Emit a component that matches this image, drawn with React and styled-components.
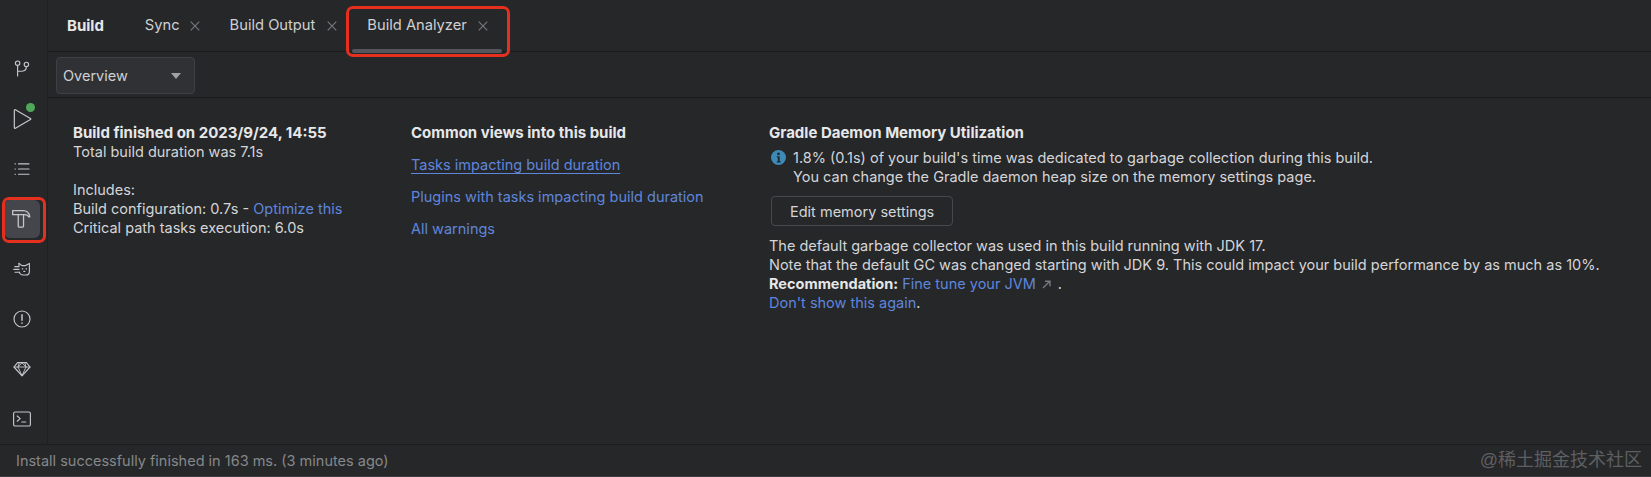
import React from 'react';
import styled, { createGlobalStyle } from 'styled-components';

const GlobalStyle = createGlobalStyle`
    html, body {
        margin: 0;
        padding: 0;
        background: #262729;
    }
    body {
        font-family: Inter, "Noto Sans", "Liberation Sans", sans-serif;
        font-size: 14.5px;
        line-height: 19px;
        color: #d4d5d8;
    }
`;

const Window = styled.div`
    width: 1651px;
    height: 477px;
    display: flex;
    flex-direction: column;
    position: relative;
    overflow: hidden;
    background: #262729;
`;

const Main = styled.div`
    display: flex;
    height: 444px;
    border-bottom: 1px solid #1c1d1f;
`;

const SideBar = styled.div`
    width: 48px;
    flex-shrink: 0;
    padding-top: 50px;
    display: flex;
    flex-direction: column;
    align-items: flex-start;
    gap: 12px;
    box-sizing: border-box;
    border-right: 1px solid #1f2022;
`;

const SideButton = styled.div`
    width: 36px;
    height: 38px;
    margin-left: 4px;
    border-radius: 6px;
    display: flex;
    align-items: center;
    justify-content: center;
    position: relative;
    color: #c4c6c9;
    background: ${props => props.$active ? '#45464b' : 'transparent'};
`;

const RedFrame = styled.div`
    position: absolute;
    border: 3px solid #e5301f;
    border-radius: 7px;
    box-sizing: border-box;
    pointer-events: none;
`;

const SideFrame = styled(RedFrame)`
    left: -2px;
    top: -3px;
    width: 44px;
    height: 46px;
`;

const Panel = styled.div`
    flex: 1;
    display: flex;
    flex-direction: column;
    min-width: 0;
`;

const TabStrip = styled.div`
    height: 52px;
    flex-shrink: 0;
    box-sizing: border-box;
    border-bottom: 1px solid #1b1c1e;
    padding-left: 19px;
    display: flex;
    align-items: stretch;
`;

const TabTitle = styled.div`
    font-weight: 700;
    font-size: 15px;
    color: #e6e7e9;
    display: flex;
    align-items: center;
    margin-right: 41px;
`;

const Tab = styled.div`
    display: flex;
    align-items: center;
    gap: ${props => props.$closeGap}px;
    font-size: 14.7px;
    color: #cfd0d3;
    margin-right: ${props => props.$gap}px;
    position: relative;
`;

const TabUnderline = styled.div`
    position: absolute;
    left: -15px;
    right: -14px;
    bottom: -2px;
    height: 4px;
    border-radius: 2px;
    background: #55565d;
`;

const TabFrame = styled(RedFrame)`
    left: -21px;
    right: -22px;
    top: 6px;
    bottom: -6px;
`;

const CloseMark = styled.svg`
    width: 10px;
    height: 10px;
    flex-shrink: 0;
    stroke: #77797d;
    stroke-width: 1.1;
    fill: none;
`;

const Toolbar = styled.div`
    height: 46px;
    flex-shrink: 0;
    box-sizing: border-box;
    border-bottom: 1px solid #1b1c1e;
    padding: 5px 0 0 8px;
`;

const Dropdown = styled.div`
    width: 139px;
    height: 37px;
    box-sizing: border-box;
    background: #303135;
    border: 1px solid #3f4044;
    border-radius: 4px;
    padding: 0 13px 0 6px;
    display: flex;
    align-items: center;
    justify-content: space-between;
    color: #cfd0d3;
`;

const Caret = styled.div`
    width: 0;
    height: 0;
    border-left: 5.5px solid transparent;
    border-right: 5.5px solid transparent;
    border-top: 6px solid #a0a1a5;
`;

const Content = styled.div`
    flex: 1;
    display: flex;
    padding: 25px 0 0 25px;
`;

const SummaryColumn = styled.div`
    width: 338px;
    flex-shrink: 0;
`;

const ViewsColumn = styled.div`
    width: 358px;
    flex-shrink: 0;
`;

const MemoryColumn = styled.div`
    flex: 1;
`;

const Heading = styled.div`
    font-weight: 700;
    font-size: 15px;
    color: #e6e7e9;
    white-space: nowrap;
`;

const Line = styled.div`
    min-height: 19px;
    white-space: nowrap;
`;

const Link = styled.span`
    color: #5f86db;
    text-decoration: ${props => props.$underline ? 'underline' : 'none'};
    text-underline-offset: 3px;
    text-decoration-thickness: 1px;
`;

const ViewLink = styled(Link)`
    display: block;
    margin-top: 13px;
    white-space: nowrap;
`;

const Strong = styled.span`
    font-weight: 700;
    color: #e6e7e9;
`;

const InfoRow = styled.div`
    display: flex;
    gap: 7px;
    margin-top: 6px;
    margin-left: 2px;
`;

const InfoIcon = styled.svg`
    width: 15px;
    height: 15px;
    margin-top: 2px;
    flex-shrink: 0;
`;

const EditButton = styled.div`
    width: 182px;
    height: 30px;
    margin: 10px 0 10px 2px;
    box-sizing: border-box;
    border: 1px solid #47484d;
    border-radius: 4px;
    display: flex;
    align-items: center;
    padding-left: 18px;
    color: #d4d5d8;
`;

const OutArrow = styled.svg`
    width: 9px;
    height: 9px;
    margin: 0 7px 0 6px;
    stroke: #77797d;
    stroke-width: 1.4;
    fill: none;
`;

const StatusBar = styled.div`
    flex: 1;
    display: flex;
    align-items: center;
    justify-content: space-between;
    padding: 0 9px 0 16px;
    color: #85878b;
    border-bottom: 1px solid #3a3b3e;
`;

const Watermark = styled.div`
    font-family: "Liberation Sans", "Noto Sans CJK SC", sans-serif;
    font-size: 18px;
    color: #5e5f61;
    white-space: nowrap;
`;

const RunDot = styled.div`
    position: absolute;
    top: 3px;
    right: 5px;
    width: 9px;
    height: 9px;
    border-radius: 50%;
    background: #4fa85a;
`;

const Icon = ({ children, size = 20 }) => (
    <svg width={size} height={size} viewBox="0 0 20 20" fill="none" stroke="currentColor" strokeWidth="1.15" strokeLinecap="round" strokeLinejoin="round">
        {children}
    </svg>
);

const Close = () => (
    <CloseMark viewBox="0 0 10 10"><path d="M.7.7l8.6 8.6M9.3.7L.7 9.3" /></CloseMark>
);

export default function App() {
    return (
        <Window>
            <GlobalStyle />
            <Main>
                <SideBar>
                    <SideButton>
                        <Icon>
                            <circle cx="5.6" cy="4.2" r="2.2" />
                            <circle cx="14.4" cy="5.4" r="2.2" />
                            <path d="M5.6 6.4V17M5.6 12.2h4.4c2.6 0 4.4-1.8 4.4-4.6" />
                        </Icon>
                    </SideButton>
                    <SideButton>
                        <Icon size={24}>
                            <path d="M3.6 2.8v14.4c0 .5.5.8.9.5L17 10.4c.4-.2.4-.7 0-.9L4.5 2.3c-.4-.2-.9 0-.9.5z" strokeWidth="1" />
                        </Icon>
                        <RunDot />
                    </SideButton>
                    <SideButton>
                        <Icon>
                            <path d="M6.5 4.8h10.5M6.5 10h10.5M6.5 15.2h10.5M3 4.8h.4M3 10h.4M3 15.2h.4" />
                        </Icon>
                    </SideButton>
                    <SideButton $active>
                        <Icon size={22}>
                            <path d="M1.5 2.4h9.6c3.2 0 5.4 2 6 5.6h-.9c-.8-1.2-2-1.9-4-1.9H1.5z" />
                            <path d="M6.6 6.1v10.6c0 .4.2.6.6.6h3.6c.4 0 .6-.2.6-.6V6.1" />
                        </Icon>
                        <SideFrame />
                    </SideButton>
                    <SideButton>
                        <Icon>
                            <path d="M7 4.4l3 2.2h3.6L17.4 4.4v8c0 2.1-1.5 3.6-3.6 3.6h-2.6c-2 0-3.5-1.1-3.9-3" />
                            <path d="M7 4.4v2.8M2.8 7.6h4.2M1.8 10.4h5.2M3 13.2h4.2M10.2 9.8h.6M14 9.8h.6M11.8 12.4h1" />
                        </Icon>
                    </SideButton>
                    <SideButton>
                        <Icon>
                            <circle cx="10" cy="10" r="8" />
                            <path d="M10 5.8v5.4M10 14.1v.2" strokeWidth="1.5" />
                        </Icon>
                    </SideButton>
                    <SideButton>
                        <Icon>
                            <path d="M5.6 3.6h8.8L18 8l-8 8.8L2 8z" />
                            <path d="M2 8h16M7.2 3.8L6 8l4 8.6L14 8l-1.2-4.2M10 3.8L6 8M10 3.8L14 8" strokeWidth=".9" />
                        </Icon>
                    </SideButton>
                    <SideButton>
                        <Icon>
                            <rect x="1.6" y="3" width="16.8" height="14" rx="1.6" />
                            <path d="M5.2 7l3 2.6-3 2.6M9.8 13h4" />
                        </Icon>
                    </SideButton>
                </SideBar>
                <Panel>
                    <TabStrip>
                        <TabTitle>Build</TabTitle>
                        <Tab $closeGap={10} $gap={30}>Sync <Close /></Tab>
                        <Tab $closeGap={12} $gap={30}>Build Output <Close /></Tab>
                        <Tab $closeGap={11} $gap={0}>
                            Build Analyzer <Close />
                            <TabUnderline />
                            <TabFrame />
                        </Tab>
                    </TabStrip>
                    <Toolbar>
                        <Dropdown>Overview<Caret /></Dropdown>
                    </Toolbar>
                    <Content>
                        <SummaryColumn>
                            <Heading>Build finished on 2023/9/24, 14:55</Heading>
                            <Line>Total build duration was 7.1s</Line>
                            <Line />
                            <Line>Includes:</Line>
                            <Line>Build configuration: 0.7s - <Link>Optimize this</Link></Line>
                            <Line>Critical path tasks execution: 6.0s</Line>
                        </SummaryColumn>
                        <ViewsColumn>
                            <Heading>Common views into this build</Heading>
                            <ViewLink $underline>Tasks impacting build duration</ViewLink>
                            <ViewLink>Plugins with tasks impacting build duration</ViewLink>
                            <ViewLink>All warnings</ViewLink>
                        </ViewsColumn>
                        <MemoryColumn>
                            <Heading>Gradle Daemon Memory Utilization</Heading>
                            <InfoRow>
                                <InfoIcon viewBox="0 0 15 15">
                                    <circle cx="7.5" cy="7.5" r="7.5" fill="#3c8ab5" />
                                    <circle cx="7.5" cy="3.9" r="1.4" fill="#1f2b33" />
                                    <path d="M5.8 6.2h2.9v5h1v1.2H5.8v-1.2h1v-3.8h-1z" fill="#1f2b33" />
                                </InfoIcon>
                                <div>
                                    <Line>1.8% (0.1s) of your build's time was dedicated to garbage collection during this build.</Line>
                                    <Line>You can change the Gradle daemon heap size on the memory settings page.</Line>
                                </div>
                            </InfoRow>
                            <EditButton>Edit memory settings</EditButton>
                            <Line>The default garbage collector was used in this build running with JDK 17.</Line>
                            <Line>Note that the default GC was changed starting with JDK 9. This could impact your build performance by as much as 10%.</Line>
                            <Line>
                                <Strong>Recommendation:</Strong> <Link>Fine tune your JVM</Link>
                                <OutArrow viewBox="0 0 9 9"><path d="M1 8l6.5-6.5M3 1.2h5v5" /></OutArrow>.
                            </Line>
                            <Line><Link>Don't show this again</Link>.</Line>
                        </MemoryColumn>
                    </Content>
                </Panel>
            </Main>
            <StatusBar>
                <span>Install successfully finished in 163 ms. (3 minutes ago)</span>
                <Watermark>@稀土掘金技术社区</Watermark>
            </StatusBar>
        </Window>
    );
}
